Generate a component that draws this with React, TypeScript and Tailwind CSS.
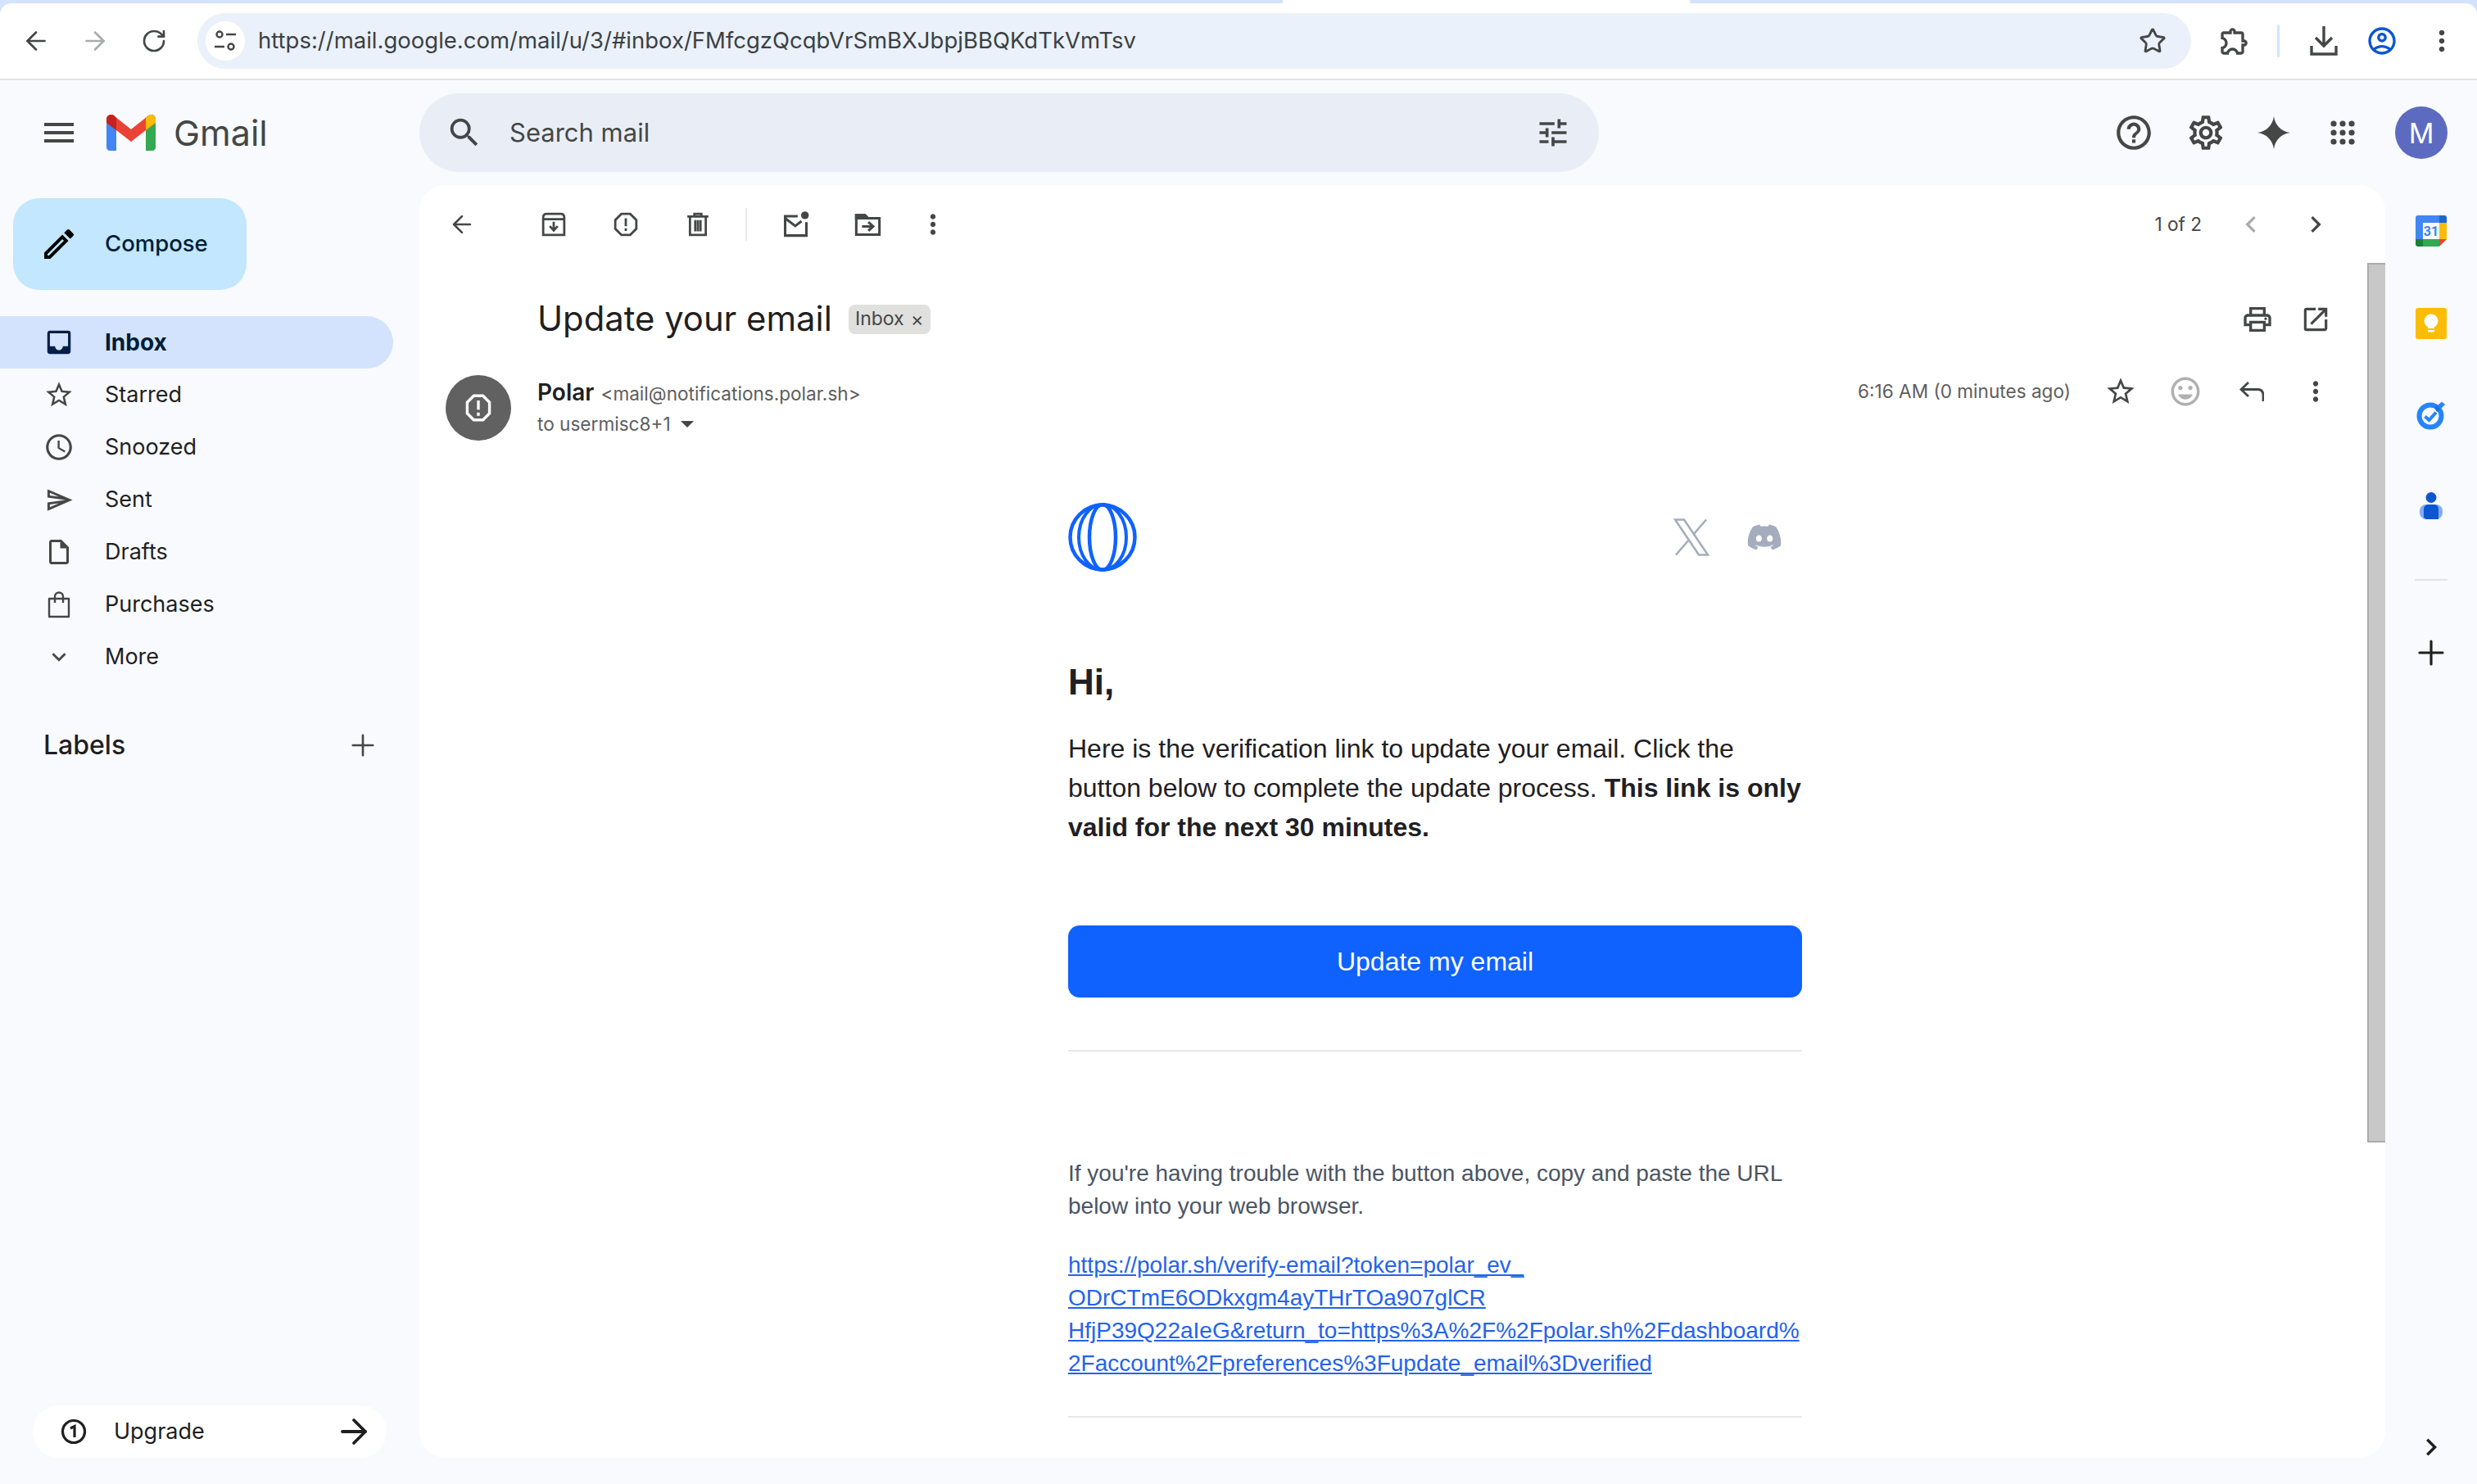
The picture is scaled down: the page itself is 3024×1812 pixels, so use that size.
import type { ReactNode } from "react";
import { ArrowLeft, ArrowRight, Plus, RotateCw, Star } from "lucide-react";
import { FaDiscord } from "react-icons/fa";
import {
  MdChevronLeft,
  MdChevronRight,
  MdExpandMore,
  MdHelpOutline,
  MdInbox,
  MdMenu,
  MdMoreVert,
  MdOpenInNew,
  MdOutlineAccountCircle,
  MdOutlineCreate,
  MdOutlineExtension,
  MdOutlineInsertDriveFile,
  MdOutlinePrint,
  MdOutlineSchedule,
  MdOutlineSend,
  MdOutlineSettings,
  MdOutlineStarBorder,
  MdOutlineInsertEmoticon,
  MdSearch,
  MdTune,
} from "react-icons/md";

const ink = "#444746";

function ToolSvg({ children, size = 30 }: { children: ReactNode; size?: number }) {
  return (
    <svg width={size} height={size} viewBox="0 0 28 28" fill="none" stroke={ink} strokeWidth="2.600">
      {children}
    </svg>
  );
}

function ToolButton({ children, className = "" }: { children: ReactNode; className?: string }) {
  return <div className={`flex h-[80px] w-[80px] shrink-0 items-center justify-center ${className}`}>{children}</div>;
}

function PurchasesIcon() {
  return (
    <svg width="28" height="33" viewBox="0 0 28 33" fill="none" stroke={ink} strokeWidth="2.400">
      <path d="M2 9H26V31H2Z" strokeLinejoin="round" />
      <path d="M9 14V6.500a5 5 0 0 1 10 0V14" />
    </svg>
  );
}

function GmailLogo() {
  return (
    <svg width="60" height="44" viewBox="0 0 60 44">
      <path d="M0 6C0 2 3 0 6 0c2 0 3 1 4 2l2 2v40H4c-2 0-4-2-4-4Z" fill="#4285f4" />
      <path d="M48 4l2-2c1-1 3-2 4-2 4 0 6 3 6 6v34c0 2-2 4-4 4h-8Z" fill="#34a853" />
      <path d="M0 10V6c0-6 7-8 10-4l20 16L50 2c4-4 10-2 10 4v4L48 19 30 33 12 19Z" fill="#ea4335" />
      <path d="M0 6c0-6 7-8 10-4l2 2v15L0 10Z" fill="#c5221f" />
      <path d="M48 4l2-2c3-4 10-2 10 4v4l-12 9Z" fill="#fbbc04" />
    </svg>
  );
}

function SparkIcon() {
  return (
    <svg width="40" height="40" viewBox="0 0 40 40" fill={ink}>
      <path d="M20 0C21.500 11 29 18.500 40 20 29 21.500 21.500 29 20 40 18.500 29 11 21.500 0 20 11 18.500 18.500 11 20 0Z" />
    </svg>
  );
}

function AppsIcon() {
  const dots = [5, 16, 27];
  return (
    <svg width="32" height="32" viewBox="0 0 32 32" fill={ink}>
      {dots.map((y) => dots.map((x) => <circle key={`${x}-${y}`} cx={x} cy={y} r="3.600" />))}
    </svg>
  );
}

function PolarLogo() {
  return (
    <svg width="84" height="84" viewBox="0 0 84 84" fill="none" stroke="#0f62fe">
      <circle cx="42" cy="42" r="39.500" strokeWidth="4.500" />
      <ellipse cx="42" cy="42" rx="29" ry="40" strokeWidth="4" />
      <ellipse cx="42" cy="42" rx="16" ry="40" strokeWidth="4.500" />
    </svg>
  );
}

function XOutline() {
  return (
    <svg width="44" height="46" viewBox="0 0 44 46" fill="none" stroke="#a3adbd" strokeWidth="2.600">
      <path d="M2 1.500H13L42 44.500H31Z" />
      <path d="M40 1.500 24 20M19 26 3 44.500" />
    </svg>
  );
}

function CalendarIcon() {
  return (
    <svg width="38" height="38" viewBox="0 0 38 38">
      <path d="M3 0H29V9H9V29H0V3C0 1 1 0 3 0Z" fill="#4285f4" />
      <path d="M29 0H35C37 0 38 1 38 3V9H29Z" fill="#1967d2" />
      <path d="M29 9H38V29H29Z" fill="#fbbc04" />
      <path d="M9 29H29V38H9Z" fill="#34a853" />
      <path d="M0 29H9V38H3C1 38 0 37 0 35Z" fill="#188038" />
      <path d="M29 29H38L29 38Z" fill="#ea4335" />
      <text x="19" y="25" textAnchor="middle" fontSize="16" fontWeight="700" fill="#4285f4" fontFamily="Roboto, sans-serif">31</text>
    </svg>
  );
}

function KeepIcon() {
  return (
    <svg width="38" height="38" viewBox="0 0 38 38">
      <rect width="38" height="38" rx="3" fill="#fbbc04" />
      <circle cx="19" cy="16" r="8.500" fill="#fff" />
      <rect x="15" y="22" width="8" height="3" fill="#fff" />
      <rect x="15" y="27" width="8" height="2.500" fill="#fff" />
    </svg>
  );
}

function TasksIcon() {
  return (
    <svg width="36" height="36" viewBox="0 0 36 36" fill="none">
      <circle cx="17" cy="19" r="13.500" stroke="#2684fc" strokeWidth="6" />
      <path d="M10.500 19.500 15.500 24 24 14.500" stroke="#2684fc" strokeWidth="4" />
      <path d="M26 6 31 1.500 35 5 29 11Z" fill="#2684fc" />
      <path d="M26 6 29 11 25 14 22 9Z" fill="#1a6fdc" />
    </svg>
  );
}

function ContactsIcon() {
  return (
    <svg width="28" height="33" viewBox="0 0 28 33">
      <circle cx="14" cy="6.500" r="6.500" fill="#0b57d0" />
      <rect x="0" y="15" width="28" height="18" rx="8" fill="#84a9f5" />
      <path d="M5 21c0-3.500 2-6 6-6h6c4 0 6 2.500 6 6v12H9c-2.500 0-4-1.500-4-4Z" fill="#0b57d0" />
    </svg>
  );
}

const navItems = [
  { label: "Starred", icon: <MdOutlineStarBorder size={38} color={ink} /> },
  { label: "Snoozed", icon: <MdOutlineSchedule size={38} color={ink} /> },
  { label: "Sent", icon: <MdOutlineSend size={35} color={ink} /> },
  { label: "Drafts", icon: <MdOutlineInsertDriveFile size={36} color={ink} /> },
  { label: "Purchases", icon: <PurchasesIcon /> },
  { label: "More", icon: <MdExpandMore size={34} color={ink} /> },
];

function ChromeBar() {
  return (
    <div className="shrink-0 bg-[#d3e3fd]">
      <div className="flex h-[4px]">
        <div className="w-[1566px]" />
        <div className="w-[497px] bg-white" />
      </div>
      <div className="flex h-[94px] items-center rounded-t-[14px] border-b-2 border-[#e2e3e3] bg-white">
        <div className="flex w-[241px] shrink-0 items-center pl-[26px]">
          <ArrowLeft size={36} strokeWidth={1.8} color={ink} />
          <ArrowRight size={36} strokeWidth={1.8} color="#a9abac" className="ml-[36px]" />
          <RotateCw size={32} strokeWidth={2} color={ink} className="ml-[38px]" />
        </div>
        <div className="flex h-[68px] w-[2434px] shrink-0 items-center rounded-full bg-[#eaf1fa] pl-[10px] pr-[30px]">
          <div className="flex h-[48px] w-[48px] items-center justify-center rounded-full bg-white">
            <svg width="26" height="28" viewBox="0 0 26 28" fill="none" stroke={ink} strokeWidth="2.400">
              <circle cx="6" cy="6" r="3.500" />
              <path d="M14 6H26M0 21H12" />
              <circle cx="20" cy="21" r="3.500" />
            </svg>
          </div>
          <span className="ml-[16px] flex-1 text-[27.5px] text-[#3c4043]">
            https://mail.google.com/mail/u/3/#inbox/FMfcgzQcqbVrSmBXJbpjBBQKdTkVmTsv
          </span>
          <Star size={34} strokeWidth={2} color={ink} />
        </div>
        <MdOutlineExtension size={40} color={ink} className="ml-[33px]" />
        <div className="ml-[32px] h-[40px] w-[3px] rounded-full bg-[#d3e3fd]" />
        <svg width="34" height="36" viewBox="0 0 34 36" fill="none" stroke={ink} strokeWidth="3.400" className="ml-[37px]">
          <path d="M17 0V24M7 14 17 24 27 14M2 24V34H32V24" />
        </svg>
        <MdOutlineAccountCircle size={40} color="#0b57d0" className="ml-[34px]" />
        <MdMoreVert size={40} color={ink} className="ml-[33px]" />
      </div>
    </div>
  );
}

function GmailHeader() {
  return (
    <div className="flex h-[128px] shrink-0 items-center">
      <div className="flex w-[512px] shrink-0 items-center pl-[48px]">
        <MdMenu size={48} color={ink} />
        <div className="ml-[34px]">
          <GmailLogo />
        </div>
        <span className="ml-[22px] text-[43px] leading-none text-[#444746]">Gmail</span>
      </div>
      <div className="flex h-[96px] w-[1440px] shrink-0 items-center rounded-full bg-[#e9eef6] pl-[32px] pr-[34px]">
        <MdSearch size={46} color={ink} />
        <span className="ml-[32px] flex-1 text-[31px] text-[#444746]">Search mail</span>
        <MdTune size={44} color={ink} />
      </div>
      <div className="ml-auto flex items-center pr-[36px]">
        <MdHelpOutline size={50} color={ink} />
        <MdOutlineSettings size={50} color={ink} className="ml-[38px]" />
        <div className="ml-[38px]">
          <SparkIcon />
        </div>
        <div className="ml-[48px]">
          <AppsIcon />
        </div>
        <div className="ml-[48px] flex h-[64px] w-[64px] items-center justify-center rounded-full bg-[#5c6bc0] text-[34px] text-white">
          M
        </div>
      </div>
    </div>
  );
}

function Sidebar() {
  return (
    <aside className="flex w-[512px] shrink-0 flex-col">
      <div className="ml-[16px] mt-[16px] flex h-[112px] w-[285px] items-center rounded-[32px] bg-[#c2e7ff] pl-[32px]">
        <MdOutlineCreate size={48} color="#000" />
        <span className="ml-[32px] text-[27.5px] font-medium text-[#001d35]">Compose</span>
      </div>
      <nav className="mt-[32px] flex flex-col">
        <div className="flex h-[64px] w-[480px] items-center rounded-r-full bg-[#d3e3fd] pl-[53px]">
          <div className="flex w-[38px] justify-center">
            <MdInbox size={38} color="#041e49" />
          </div>
          <span className="ml-[37px] text-[28px] font-bold text-[#001d35]">Inbox</span>
        </div>
        {navItems.map((item) => (
          <div key={item.label} className="flex h-[64px] w-[480px] items-center pl-[53px]">
            <div className="flex w-[38px] justify-center">{item.icon}</div>
            <span className="ml-[37px] text-[27px] text-[#1f1f1f]">{item.label}</span>
          </div>
        ))}
      </nav>
      <div className="mt-[52px] flex w-[480px] items-center justify-between pl-[53px] pr-[16px]">
        <span className="text-[32px] font-medium text-[#1f1f1f]">Labels</span>
        <Plus size={42} strokeWidth={1.5} color={ink} />
      </div>
      <div className="ml-[40px] mt-auto flex h-[64px] w-[432px] items-center rounded-full bg-white pl-[34px] pr-[16px]">
        <svg width="32" height="32" viewBox="0 0 32 32" fill="none" stroke="#1f1f1f" strokeWidth="3.200">
          <circle cx="16" cy="16" r="13.500" />
          <path d="M12 12 17 9.500V23" />
        </svg>
        <span className="ml-[33px] flex-1 text-[27px] text-[#1f1f1f]">Upgrade</span>
        <ArrowRight size={48} strokeWidth={1.9} color="#1f1f1f" />
      </div>
    </aside>
  );
}

function EmailBody() {
  return (
    <div className="ml-[792px] w-[896px] font-['Liberation_Sans',sans-serif]">
      <div className="mt-[76px] flex h-[84px] items-center">
        <PolarLogo />
        <div className="ml-auto flex items-center gap-[45px] pr-[24px]">
          <XOutline />
          <FaDiscord size={44} color="#a3adbd" />
        </div>
      </div>
      <h1 className="mt-[107px] text-[44px] font-bold leading-[56px] text-[#1f2024]">Hi,</h1>
      <p className="mt-[29px] whitespace-nowrap text-[32px] leading-[48px] text-[#1f2024]">
        Here is the verification link to update your email. Click the
        <br />
        button below to complete the update process. <b>This link is only</b>
        <br />
        <b>valid for the next 30 minutes.</b>
      </p>
      <div className="mt-[96px] flex h-[88px] items-center justify-center rounded-[14px] bg-[#0f62fe] text-[32px] text-white">
        Update my email
      </div>
      <div className="mt-[64px] h-[2px] bg-[#e5e7eb]" />
      <p className="mt-[129px] whitespace-nowrap text-[28px] leading-[40px] text-[#4b5563]">
        If you're having trouble with the button above, copy and paste the URL
        <br />
        below into your web browser.
      </p>
      <p className="mt-[32px] whitespace-nowrap text-[28px] leading-[40px] text-[#2563eb] underline">
        https://polar.sh/verify-email?token=polar_ev_
        <br />
        ODrCTmE6ODkxgm4ayTHrTOa907glCR
        <br />
        HfjP39Q22aIeG&amp;return_to=https%3A%2F%2Fpolar.sh%2Fdashboard%
        <br />
        2Faccount%2Fpreferences%3Fupdate_email%3Dverified
      </p>
      <div className="mt-[44px] h-[2px] bg-[#e5e7eb]" />
    </div>
  );
}

function MailCard() {
  return (
    <main className="flex w-[2400px] shrink-0 flex-col overflow-hidden rounded-[32px] bg-white">
      <div className="flex h-[95px] shrink-0 items-center pl-[12px]">
        <ToolButton>
          <ArrowLeft size={34} strokeWidth={1.8} color={ink} />
        </ToolButton>
        <ToolButton className="ml-[32px]">
          <ToolSvg>
            <path d="M2 6Q2 2 6 2H22Q26 2 26 6V26H2Z" />
            <path d="M2 8H26" />
            <path d="M14 11V20M9.500 16 14 21 18.500 16" />
          </ToolSvg>
        </ToolButton>
        <ToolButton className="ml-[8px]">
          <ToolSvg>
            <path d="M9 2H19L26 9V19L19 26H9L2 19V9Z" />
            <path d="M14 7V16M14 18.500V21.500" />
          </ToolSvg>
        </ToolButton>
        <ToolButton className="ml-[8px]">
          <ToolSvg>
            <path d="M2 5H26M10 5V2H18V5M5 5V26H23V5M11 9V22M14 9V22M17 9V22" />
          </ToolSvg>
        </ToolButton>
        <div className="ml-[18px] h-[40px] w-[2px] bg-[#e8eaed]" />
        <ToolButton className="ml-[19px]">
          <ToolSvg size={33}>
            <path d="M25 12V26H3V6H16" />
            <path d="M3 8 13.500 16 20 11" />
            <circle cx="23.500" cy="5" r="4" fill={ink} stroke="none" />
          </ToolSvg>
        </ToolButton>
        <ToolButton className="ml-[8px]">
          <ToolSvg size={33}>
            <path d="M2 5H11L14 8H26V25H2Z" />
            <path d="M2 5H11L14 8H2Z" fill={ink} />
            <path d="M8 16.500H19M14.500 12 19.500 16.500 14.500 21" />
          </ToolSvg>
        </ToolButton>
        <ToolButton>
          <MdMoreVert size={38} color={ink} />
        </ToolButton>
        <span className="ml-auto text-[22.6px] text-[#444746]">1 of 2</span>
        <MdChevronLeft size={40} color="#a9abac" className="ml-[40px]" />
        <MdChevronRight size={40} color={ink} className="ml-[39px]" />
        <div className="w-[65px]" />
      </div>

      <div className="flex min-h-0 flex-1">
        <div className="min-w-0 flex-1 overflow-hidden">
          <div className="flex h-[137px] items-center pl-[144px]">
            <span className="text-[41.8px] leading-none text-[#1f1f1f]">Update your email</span>
            <span className="ml-[20px] flex h-[36px] w-[100px] items-center justify-center gap-[8px] rounded-[8px] bg-[#e0e0de] text-[23px] text-[#444746]">
              Inbox
              <span className="text-[24px] leading-none">×</span>
            </span>
            <MdOutlinePrint size={40} color={ink} className="ml-auto" />
            <MdOpenInNew size={38} color={ink} className="ml-[32px] mr-[44px]" />
          </div>

          <div className="flex h-[80px] pl-[32px]">
            <div className="flex h-[80px] w-[80px] items-center justify-center rounded-full bg-[#616161]">
              <svg width="32" height="34" viewBox="0 0 28 30" fill="none" stroke="#fff" strokeWidth="3">
                <path d="M9 2H19L26 9V21L19 28H9L2 21V9Z" />
                <path d="M14 7V17M14 20V23.500" />
              </svg>
            </div>
            <div className="ml-[32px] flex flex-col">
              <div className="flex h-[40px] items-baseline">
                <span className="text-[28px] font-semibold text-[#1f1f1f]">Polar</span>
                <span className="ml-[8px] text-[22.6px] text-[#5e5e5e]">&lt;mail@notifications.polar.sh&gt;</span>
              </div>
              <div className="flex h-[40px] items-center text-[22.6px] text-[#5e5e5e]">
                to usermisc8+1
                <svg width="16" height="8" viewBox="0 0 16 8" fill="#444746" className="ml-[12px]">
                  <path d="M0 0H16L8 8Z" />
                </svg>
              </div>
            </div>
            <div className="ml-auto flex h-[40px] items-center pr-[44px]">
              <span className="text-[22.6px] text-[#5e5e5e]">6:16 AM (0 minutes ago)</span>
              <MdOutlineStarBorder size={40} color={ink} className="ml-[41px]" />
              <MdOutlineInsertEmoticon size={42} color="#b0b0b0" className="ml-[38px]" />
              <svg width="30" height="24" viewBox="0 0 30 24" fill="none" stroke={ink} strokeWidth="2.800" className="ml-[45px]">
                <path d="M11 1 2 9.500 11 18M2 9.500H22Q29 9.500 29 16.500V24" />
              </svg>
              <MdMoreVert size={38} color={ink} className="ml-[44px]" />
            </div>
          </div>

          <EmailBody />
        </div>
        <div className="h-[1074px] w-[22px] shrink-0 border-y-2 border-l-2 border-[#ababab] bg-[#c8c8c8]" />
      </div>
    </main>
  );
}

function RightRail() {
  return (
    <aside className="flex w-[112px] shrink-0 flex-col items-center pt-[37px]">
      <CalendarIcon />
      <div className="mt-[75px]">
        <KeepIcon />
      </div>
      <div className="mt-[75px]">
        <TasksIcon />
      </div>
      <div className="mt-[76px]">
        <ContactsIcon />
      </div>
      <div className="mt-[73px] h-[2px] w-[40px] bg-[#e0e2e6]" />
      <Plus size={48} strokeWidth={1.6} color="#1f1f1f" className="mt-[64px]" />
      <MdChevronRight size={42} color="#1f1f1f" className="mb-[-8px] mt-auto" />
    </aside>
  );
}

export default function App() {
  return (
    <div className="flex h-[1812px] w-[3024px] flex-col overflow-hidden bg-[#f8fafd] font-['Inter',sans-serif]">
      <ChromeBar />
      <GmailHeader />
      <div className="flex min-h-0 flex-1 pb-[32px]">
        <Sidebar />
        <MailCard />
        <RightRail />
      </div>
    </div>
  );
}
